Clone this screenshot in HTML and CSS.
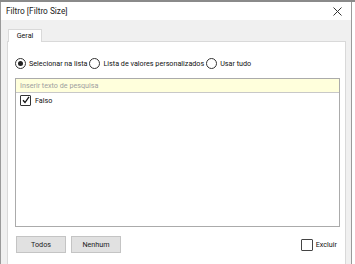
FILE: index.html
```html
<!DOCTYPE html>
<html lang="pt">
<head>
    <meta charset="UTF-8">
    <title>Filtro</title>
    <link rel="stylesheet" href="styles.css">
</head>
<body>
    <div class="top_edge"></div>
    <div class="dialog">
        <div class="title_bar">
            <span class="title">Filtro [Filtro Size]</span>
            <svg class="close" width="9" height="9" viewBox="0 0 9 9">
                <path d="M0.5 0.5 L8.5 8.5 M8.5 0.5 L0.5 8.5" stroke="#333" stroke-width="1" fill="none"/>
            </svg>
        </div>
        <div class="dialog_body">
            <div class="tabs">
                <div class="tab">Geral</div>
            </div>
            <div class="panel">
                <div class="mode_row">
                    <label class="radio_item"><span class="radio checked"></span>Selecionar na lista</label>
                    <label class="radio_item"><span class="radio"></span>Lista de valores personalizados</label>
                    <label class="radio_item"><span class="radio"></span>Usar tudo</label>
                </div>
                <div class="list_box">
                    <div class="search">Inserir texto de pesquisa</div>
                    <div class="list_item">
                        <span class="check">
                            <svg width="8" height="8" viewBox="0 0 8 8">
                                <path d="M1 4.2 L3 6.5 L7 0.8" stroke="#111" stroke-width="1.3" fill="none"/>
                            </svg>
                        </span>
                        Falso
                    </div>
                </div>
                <div class="footer">
                    <button class="btn">Todos</button>
                    <button class="btn">Nenhum</button>
                    <label class="exclude"><span class="check"></span>Excluir</label>
                </div>
            </div>
        </div>
    </div>
</body>
</html>
```

FILE: styles.css
```css
html, body{
    margin:0;
    padding:0;
    width:355px;
    height:264px;
    overflow:hidden;
    background:#fff;
    font-family:Roboto, "Noto Sans", sans-serif;
    color:#111;
}
.top_edge{
    height:2px;
    background:#8a8a8a;
}
.dialog{
    display:flex;
    flex-direction:column;
    height:262px;
    margin-right:3px;
    border-left:1px solid #9a9a9a;
    border-right:1px solid #9a9a9a;
    box-sizing:border-box;
}
.title_bar{
    height:18px;
    background:#fff;
    display:flex;
    align-items:center;
    padding:0 9px 0 5px;
}
.title{
    flex:1;
    font-size:8.3px;
    color:#222;
}
.close{
    margin-top:1px;
}
.dialog_body{
    flex:1;
    background:#f0f0f0;
    padding:8px 5px 0 6px;
    display:flex;
    flex-direction:column;
}
.tabs{
    display:flex;
    padding-left:1px;
}
.tab{
    width:32px;
    height:12px;
    line-height:12px;
    font-size:7.2px;
    text-align:center;
    background:#fff;
    border:1px solid #d9d9d9;
    border-bottom:none;
    position:relative;
    top:1px;
}
.panel{
    flex:1;
    background:#fff;
    border:1px solid #d9d9d9;
    border-bottom:none;
    padding:15px 5px 0 7px;
    display:flex;
    flex-direction:column;
}
.mode_row{
    display:flex;
    align-items:center;
    gap:2px;
    height:12px;
    font-size:7.2px;
}
.radio_item{
    display:flex;
    align-items:center;
    gap:3px;
}
.radio{
    width:9px;
    height:9px;
    border:1px solid #333;
    border-radius:50%;
    background:#fff;
    display:inline-block;
    position:relative;
}
.radio.checked::after{
    content:"";
    position:absolute;
    left:2px;
    top:2px;
    width:5px;
    height:5px;
    border-radius:50%;
    background:#222;
}
.list_box{
    margin-top:9px;
    height:149px;
    border:1px solid #ababab;
    box-sizing:border-box;
    background:#fff;
}
.search{
    height:13px;
    line-height:13px;
    background:#ffffdc;
    border-bottom:1px solid #c8c8c8;
    font-size:7.2px;
    color:#a0a0a0;
    padding-left:4px;
}
.list_item{
    display:flex;
    align-items:center;
    gap:4px;
    height:12px;
    padding-left:4px;
    font-size:7.2px;
    margin-top:1px;
}
.check{
    width:9px;
    height:9px;
    border:1px solid #333;
    background:#fff;
    display:inline-flex;
    align-items:center;
    justify-content:center;
    border-radius:1px;
}
.footer{
    display:flex;
    align-items:center;
    margin-top:9px;
    padding-left:1px;
    gap:5px;
}
.btn{
    width:50px;
    height:17px;
    padding:0;
    font-family:Roboto, "Noto Sans", sans-serif;
    font-size:7.2px;
    color:#222;
    background:#e1e1e1;
    border:1px solid #c4c4c4;
}
.exclude{
    margin-left:auto;
    margin-right:3px;
    display:flex;
    align-items:center;
    gap:3px;
    font-size:7.2px;
}
.exclude .check{
    width:10px;
    height:10px;
    border-color:#444;
}
```
